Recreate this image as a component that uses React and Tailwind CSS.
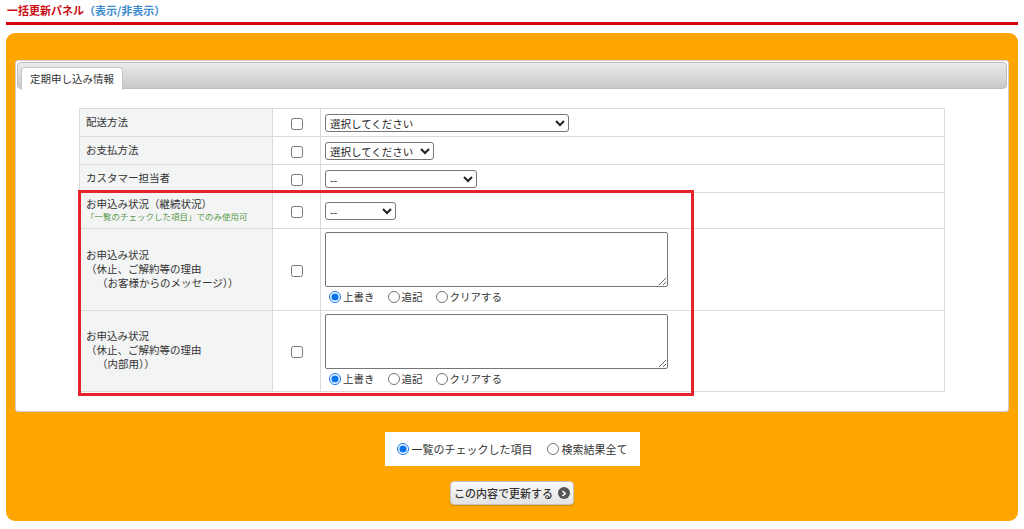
import React from "react";

const font = { fontFamily: '"Noto Sans CJK JP", "Noto Sans", sans-serif' };

function Sel({ w, label }) {
  return (
    <select
      className="h-[18px] text-[10.5px] leading-[14px] text-[#222] bg-white border border-[#767676] rounded-[3px] pl-0 outline-none"
      style={{ width: w, ...font }}
      defaultValue="a"
    >
      <option value="a">{label}</option>
    </select>
  );
}

function Radios({ name }) {
  const items = ["上書き", "追記", "クリアする"];
  return (
    <div className="flex items-center gap-[13px] text-[10.5px] leading-[14px] text-[#333] pl-[4px] mt-[3px]">
      {items.map((t, i) => (
        <label key={t} className="flex items-center gap-[2px]">
          <input type="radio" name={name} defaultChecked={i === 0} className="m-0 w-[12px] h-[12px] accent-[#0a74ec]" />
          <span>{t}</span>
        </label>
      ))}
    </div>
  );
}

function Check() {
  return <input type="checkbox" className="m-0 w-[12px] h-[12px] align-middle" />;
}

export default function App() {
  return (
    <div className="bg-white w-[1024px] h-[529px] overflow-hidden text-[#333]" style={font}>
      <div className="px-[6px] pt-[3px]">
        <div className="text-[11px] leading-[15px] font-bold pl-[1px]">
          <span className="text-[#cc0a14]">一括更新パネル</span>
          <span className="text-[#3b8ad0]">（表示/非表示）</span>
        </div>
        <div className="h-[3px] bg-[#d4000d] mt-[4px] w-[1012px]"></div>
        <div className="mt-[8px] w-[1012px] h-[488px] bg-[#ffa500] rounded-[9px] px-[9px] pt-[27px] flex flex-col items-center">
          <div className="w-[994px] h-[352px] bg-white border border-[#cfcfcf] rounded-[3px] p-[1px] flex flex-col items-center">
            <div className="relative w-full h-[27px] rounded-[4px] border border-[#bdbdbd] bg-gradient-to-b from-[#ebebeb] to-[#c9c9c9]">
              <div className="absolute left-[3px] top-[4px] w-[102px] h-[23px] bg-white border border-[#c6c6c6] border-b-0 rounded-t-[4px] flex items-center justify-center text-[10.5px] text-[#333]">
                定期申し込み情報
              </div>
            </div>
            <div className="relative mt-[19px]">
              <table className="border-collapse w-[866px] text-[10.5px] leading-[14px] text-[#333]">
                <colgroup>
                  <col style={{ width: 193 }} />
                  <col style={{ width: 48 }} />
                  <col />
                </colgroup>
                <tbody>
                  <tr className="h-[28px]">
                    <td className="border border-[#dadada] bg-[#f3f4f4] pl-[6px] pb-[2px]">配送方法</td>
                    <td className="border border-[#dadada] text-center"><Check /></td>
                    <td className="border border-[#dadada] pl-[4px]"><Sel w={244} label="選択してください" /></td>
                  </tr>
                  <tr className="h-[28px]">
                    <td className="border border-[#dadada] bg-[#f3f4f4] pl-[6px] pb-[2px]">お支払方法</td>
                    <td className="border border-[#dadada] text-center"><Check /></td>
                    <td className="border border-[#dadada] pl-[4px]"><Sel w={109} label="選択してください" /></td>
                  </tr>
                  <tr className="h-[28px]">
                    <td className="border border-[#dadada] bg-[#f3f4f4] pl-[6px] pb-[2px]">カスタマー担当者</td>
                    <td className="border border-[#dadada] text-center"><Check /></td>
                    <td className="border border-[#dadada] pl-[4px]"><Sel w={152} label="--" /></td>
                  </tr>
                  <tr className="h-[36px]">
                    <td className="border border-[#dadada] bg-[#f3f4f4] pl-[6px] pb-[2px]">
                      <div className="leading-[14px]">お申込み状況（継続状況）</div>
                      <div className="text-[8.5px] leading-[11px] text-[#5b9a4e]">「一覧のチェックした項目」でのみ使用可</div>
                    </td>
                    <td className="border border-[#dadada] text-center"><Check /></td>
                    <td className="border border-[#dadada] pl-[4px]"><Sel w={71} label="--" /></td>
                  </tr>
                  <tr className="h-[82px]">
                    <td className="border border-[#dadada] bg-[#f3f4f4] pl-[6px] pb-[2px]">
                      <div className="leading-[14px]">お申込み状況</div>
                      <div className="leading-[14px]">（休止、ご解約等の理由</div>
                      <div className="leading-[14px] pl-[11px]">（お客様からのメッセージ））</div>
                    </td>
                    <td className="border border-[#dadada] text-center"><Check /></td>
                    <td className="border border-[#dadada] pl-[4px] align-top pt-[3px]">
                      <textarea className="block w-[343px] h-[55px] border border-[#767676] rounded-[2px] resize-y"></textarea>
                      <Radios name="m1" />
                    </td>
                  </tr>
                  <tr className="h-[81px]">
                    <td className="border border-[#dadada] bg-[#f3f4f4] pl-[6px] pb-[2px]">
                      <div className="leading-[14px]">お申込み状況</div>
                      <div className="leading-[14px]">（休止、ご解約等の理由</div>
                      <div className="leading-[14px] pl-[11px]">（内部用））</div>
                    </td>
                    <td className="border border-[#dadada] text-center"><Check /></td>
                    <td className="border border-[#dadada] pl-[4px] align-top pt-[3px]">
                      <textarea className="block w-[343px] h-[55px] border border-[#767676] rounded-[2px] resize-y"></textarea>
                      <Radios name="m2" />
                    </td>
                  </tr>
                </tbody>
              </table>
              <div className="absolute left-[-1px] top-[82px] w-[616px] h-[206px] border-[3px] border-[#e8222d] pointer-events-none"></div>
            </div>
          </div>
          <div className="mt-[20px] w-[255px] h-[34px] bg-white flex items-center pl-[12px] gap-[14px] text-[11px] text-[#333]">
            <label className="flex items-center gap-[3px]">
              <input type="radio" name="scope" defaultChecked className="m-0 w-[12px] h-[12px] accent-[#0a74ec]" />
              <span>一覧のチェックした項目</span>
            </label>
            <label className="flex items-center gap-[3px]">
              <input type="radio" name="scope" className="m-0 w-[12px] h-[12px]" />
              <span>検索結果全て</span>
            </label>
          </div>
          <button className="mt-[15px] w-[124px] h-[24px] rounded-[4px] border border-[#c4c4c4] bg-gradient-to-b from-[#fafafa] to-[#e3e3e3] flex items-center justify-center gap-[5px] text-[11px] text-[#333] font-medium shadow-[0_1px_1px_rgba(0,0,0,0.15)]">
            <span>この内容で更新する</span>
            <span className="w-[12px] h-[12px] rounded-full bg-[#555] flex items-center justify-center">
              <svg width="6" height="7" viewBox="0 0 6 7"><path d="M1.5 1 L4.2 3.5 L1.5 6" stroke="#fff" strokeWidth="1.6" fill="none" /></svg>
            </span>
          </button>
        </div>
      </div>
    </div>
  );
}
